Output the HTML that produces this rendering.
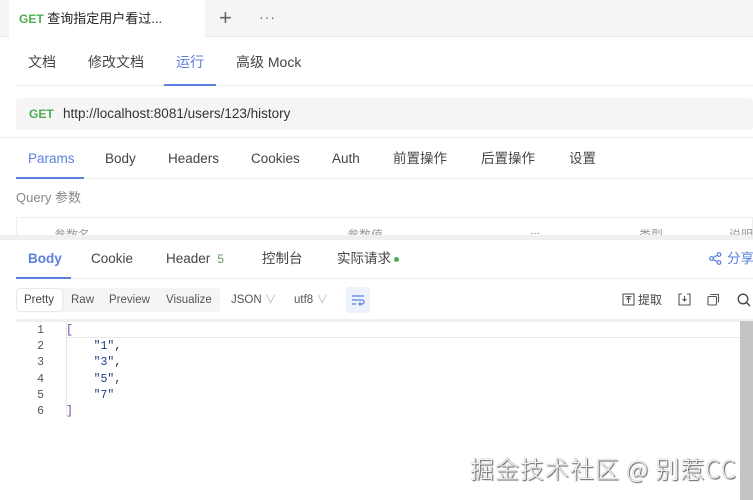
<!DOCTYPE html>
<html><head><meta charset="utf-8"><style>
*{margin:0;padding:0;box-sizing:border-box}
body{width:753px;height:500px;overflow:hidden;background:#fff;font-family:"Liberation Sans","Noto Sans CJK SC",sans-serif;color:#333;position:relative;font-size:13px}
.a{position:absolute;white-space:nowrap;line-height:18px}
.line{position:absolute;height:1px;background:#ececec}
</style></head><body>
<div class="a" style="left:0;top:0;width:753px;height:37px;background:#f5f5f5;border-bottom:1px solid #ebebeb"></div>
<div class="a" style="left:9px;top:0;width:196px;height:37px;background:#fff"></div>
<div class="a" style="left:19px;top:10px;font-size:13px;"><b style="color:#4caf50;font-size:12px">GET</b> <span style="color:#222">查询指定用户看过...</span></div>
<div class="a" style="left:219px;top:6px;font-size:22px;color:#666;font-weight:300;line-height:24px">+</div>
<div class="a" style="left:259px;top:8px;font-size:14px;color:#666;letter-spacing:1px">···</div>

<div class="a" style="left:28px;top:53px;font-size:14px;color:#444">文档</div>
<div class="a" style="left:88px;top:53px;font-size:14px;color:#444">修改文档</div>
<div class="a" style="left:176px;top:53px;font-size:14px;color:#5b7fdb">运行</div>
<div class="a" style="left:236px;top:53px;font-size:14px;color:#444">高级 Mock</div>
<div class="line" style="left:16px;top:85px;width:737px"></div>
<div class="a" style="left:164px;top:84px;width:52px;height:2px;background:#5b7fdb"></div>

<div class="a" style="left:16px;top:98px;width:737px;height:32px;background:#f5f5f5;border-radius:4px"></div>
<div class="a" style="left:29px;top:105px;font-size:12px;color:#4caf50;font-weight:bold">GET</div>
<div class="a" style="left:63px;top:105px;font-size:13.5px;color:#333">http://localhost:8081/users/123/history</div>
<div class="line" style="left:0;top:137px;width:753px"></div>

<div class="a" style="left:28px;top:150px;font-size:13.5px;color:#5b7fdb">Params</div>
<div class="a" style="left:105px;top:150px;font-size:13.5px;color:#444">Body</div>
<div class="a" style="left:168px;top:150px;font-size:13.5px;color:#444">Headers</div>
<div class="a" style="left:251px;top:150px;font-size:13.5px;color:#444">Cookies</div>
<div class="a" style="left:332px;top:150px;font-size:13.5px;color:#444">Auth</div>
<div class="a" style="left:393px;top:150px;font-size:13.5px;color:#444">前置操作</div>
<div class="a" style="left:481px;top:150px;font-size:13.5px;color:#444">后置操作</div>
<div class="a" style="left:569px;top:150px;font-size:13.5px;color:#444">设置</div>
<div class="line" style="left:16px;top:178px;width:737px"></div>
<div class="a" style="left:16px;top:177px;width:68px;height:2px;background:#5b7fdb"></div>
<div class="a" style="left:16px;top:189px;font-size:13px;color:#888">Query 参数</div>
<div class="a" style="left:16px;top:217px;width:737px;height:22px;border:1px solid #eee;border-bottom:none"></div>
<div class="a" style="left:54px;top:226px;font-size:12px;color:#999">参数名</div>
<div class="a" style="left:347px;top:226px;font-size:12px;color:#999">参数值</div>
<div class="a" style="left:639px;top:226px;font-size:12px;color:#999">类型</div>
<div class="a" style="left:729px;top:226px;font-size:12px;color:#999">说明</div>
<div class="a" style="left:0;top:235px;width:753px;height:6px;background:#f0f0f0"></div>
<div class="a" style="left:0;top:240px;width:753px;height:260px;background:#fff"></div>
<div class="a" style="left:530px;top:229px;font-size:10px;color:#666;line-height:10px">···</div>

<div class="a" style="left:28px;top:250px;font-size:13.5px;color:#5b7fdb;font-weight:bold">Body</div>
<div class="a" style="left:91px;top:250px;font-size:13.5px;color:#444">Cookie</div>
<div class="a" style="left:166px;top:250px;font-size:13.5px;color:#444">Header <span style="color:#5a9e5a;font-size:12px">&nbsp;5</span></div>
<div class="a" style="left:262px;top:250px;font-size:13.5px;color:#444">控制台</div>
<div class="a" style="left:337px;top:250px;font-size:13.5px;color:#444">实际请求<span style="display:inline-block;width:5px;height:5px;border-radius:50%;background:#4caf50;margin-left:3px;vertical-align:middle"></span></div>
<svg class="a" style="left:709px;top:252px" width="13" height="13" viewBox="0 0 13 13" fill="none" stroke="#5b7fdb" stroke-width="1.2"><circle cx="10" cy="2.5" r="1.8"/><circle cx="2.5" cy="6.5" r="1.8"/><circle cx="10" cy="10.5" r="1.8"/><path d="M4 5.5L8.5 3.3M4 7.5L8.5 9.7"/></svg>
<div class="a" style="left:727px;top:250px;font-size:13.5px;color:#5b7fdb">分享</div>
<div class="line" style="left:16px;top:278px;width:737px"></div>
<div class="a" style="left:16px;top:277px;width:55px;height:2px;background:#5b7fdb"></div>

<div class="a" style="left:16px;top:288px;width:204px;height:24px;background:#f5f5f5;border-radius:4px"></div>
<div class="a" style="left:17px;top:289px;width:45px;height:22px;background:#fff;border-radius:3px;box-shadow:0 0 2px rgba(0,0,0,.15)"></div>
<div class="a" style="left:24px;top:291px;font-size:11.5px;color:#444">Pretty</div>
<div class="a" style="left:71px;top:291px;font-size:11.5px;color:#555">Raw</div>
<div class="a" style="left:109px;top:291px;font-size:11.5px;color:#555">Preview</div>
<div class="a" style="left:166px;top:291px;font-size:11.5px;color:#555">Visualize</div>
<div class="a" style="left:231px;top:291px;font-size:11.5px;color:#555">JSON <span style="color:#bbb">∨</span></div>
<div class="a" style="left:294px;top:291px;font-size:11.5px;color:#555">utf8 <span style="color:#bbb">∨</span></div>
<div class="a" style="left:346px;top:287px;width:24px;height:26px;background:#eef2fd;border-radius:3px"></div>
<svg class="a" style="left:351px;top:293px" width="14" height="14" viewBox="0 0 14 14" fill="none" stroke="#5b7fdb" stroke-width="1.2"><path d="M1 3H13M1 7H11a2 2 0 010 4H8M9.5 9.5L8 11l1.5 1.5M1 11H5"/></svg>
<svg class="a" style="left:622px;top:293px" width="13" height="13" viewBox="0 0 13 13" fill="none" stroke="#555" stroke-width="1.1"><rect x="1" y="1" width="11" height="11"/><path d="M3.5 3.5H9.5M6.5 4.5V10M4.5 6.5L6.5 4.5 8.5 6.5"/></svg>
<div class="a" style="left:638px;top:291px;font-size:12px;color:#444">提取</div>
<svg class="a" style="left:678px;top:293px" width="13" height="13" viewBox="0 0 13 13" fill="none" stroke="#555" stroke-width="1.1"><path d="M4 1H1V12H12V1H9M6.5 3V8M4.5 6L6.5 8 8.5 6"/></svg>
<svg class="a" style="left:707px;top:293px" width="13" height="13" viewBox="0 0 13 13" fill="none" stroke="#555" stroke-width="1.1"><rect x="1" y="3.5" width="8.5" height="8.5" rx="1"/><path d="M3.5 1.5H11.5V9.5"/></svg>
<svg class="a" style="left:737px;top:293px" width="14" height="14" viewBox="0 0 14 14" fill="none" stroke="#444" stroke-width="1.3"><circle cx="6" cy="6" r="4.8"/><path d="M9.5 9.5L13 13"/></svg>

<div class="a" style="left:16px;top:319px;width:737px;height:3px;background:#f0f0f0"></div>
<div class="a" style="left:66px;top:337px;width:674px;height:1px;background:#eaeaea"></div>
<div class="a" style="left:66px;top:322px;width:1px;height:94px;background:#e5e5e5"></div>
<div class="a" style="left:740px;top:321px;width:13px;height:179px;background:#c4c4c4"></div>
<div class="a" style="left:30px;top:323px;width:14px;font-family:'Liberation Mono',monospace;font-size:11.5px;line-height:16.2px;color:#555;text-align:right">1<br>2<br>3<br>4<br>5<br>6</div>
<div class="a" style="left:66px;top:323px;font-family:'Liberation Mono',monospace;font-size:11.5px;line-height:16.2px;color:#333;white-space:pre"><span style="color:#7a3e9d">[</span>
    <span style="color:#1e3a8a">"1"</span>,
    <span style="color:#1e3a8a">"3"</span>,
    <span style="color:#1e3a8a">"5"</span>,
    <span style="color:#1e3a8a">"7"</span>
<span style="color:#7a3e9d">]</span></div>

<div class="a" style="left:470px;top:453px;font-size:24px;line-height:30px;letter-spacing:1px;color:#f4f4f4;text-shadow:1px 1px 1px #555,0 0 1px #777;font-family:'Noto Sans CJK SC','Liberation Sans',sans-serif;font-weight:300">掘金技术社区 @ 别惹CC</div>
</body></html>
